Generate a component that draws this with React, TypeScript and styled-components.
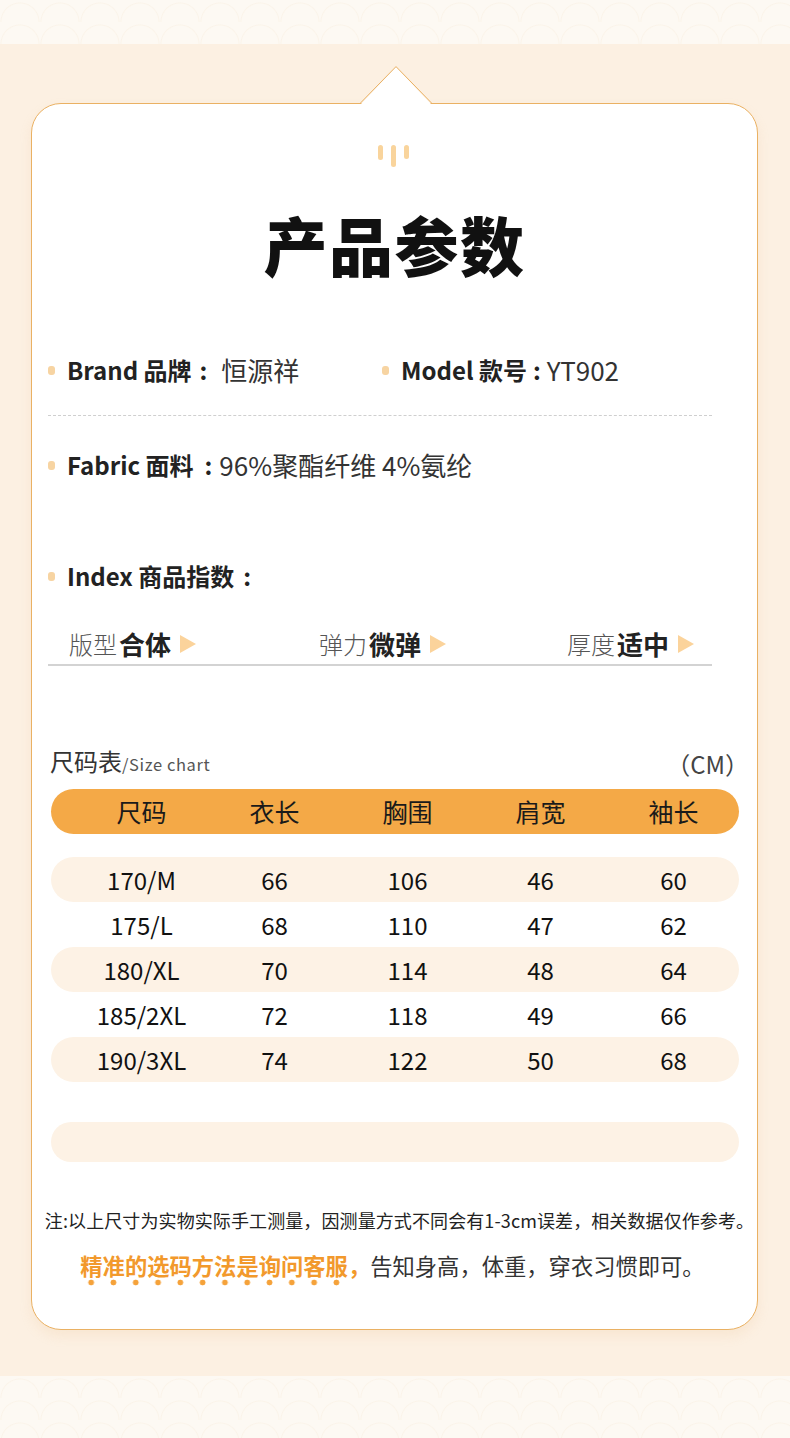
import React from "react";
import styled, { createGlobalStyle } from "styled-components";

const Global = createGlobalStyle`
  html, body { margin: 0; padding: 0; }
  body {
    width: 790px;
    font-family: "Noto Sans CJK SC", "Noto Sans", sans-serif;
    color: #222;
    background: #fcf0e2;
  }
`;

const Page = styled.div`
  width: 790px;
  height: 1438px;
  display: flex;
  flex-direction: column;
  overflow: hidden;
`;

const PatternBand = styled.div<{ $h: number }>`
  height: ${(p) => p.$h}px;
  flex: none;
  background-color: #fdf9f3;
  background-image: radial-gradient(circle at 50% 100%, transparent 18px, rgba(245, 225, 200, 0.22) 19px, transparent 20px);
  background-size: 40px 22px;
`;

const Middle = styled.div`
  flex: 1;
  background: #fcf0e2;
  padding: 59px 32px 0 31px;
`;

const Card = styled.div`
  position: relative;
  box-sizing: border-box;
  height: 1227px;
  background: #fff;
  border: 1px solid #eab163;
  border-radius: 30px;
  box-shadow: 0 6px 12px rgba(232, 190, 140, 0.18);
  display: flex;
  flex-direction: column;
`;

const Notch = styled.svg`
  position: absolute;
  top: -38px;
  left: 50%;
  transform: translateX(-50%);
  margin-left: 1px;
  overflow: visible;
`;

const Deco = styled.svg`
  align-self: center;
  margin-top: 41px;
  flex: none;
`;

const Title = styled.h1`
  margin: 44px 0 0;
  text-align: center;
  font-size: 64px;
  line-height: 64px;
  font-weight: 900;
  letter-spacing: 1.5px;
  color: #111;
`;

const InfoGrid = styled.div<{ $mt: number }>`
  margin: ${(p) => p.$mt}px 0 0 16px;
  display: grid;
  grid-template-columns: 334px 1fr;
  height: 32px;
`;

const InfoItem = styled.div`
  display: flex;
  align-items: center;
  font-size: 24px;
  line-height: 32px;
  white-space: nowrap;
`;

const Bullet = styled.span`
  width: 7px;
  height: 9px;
  border-radius: 3px;
  background: #f7d4a2;
  margin-right: 12px;
  flex: none;
`;

const Label = styled.span`
  font-weight: 700;
  color: #222;
`;

const Colon = styled.span<{ $ml?: number; $mr?: number }>`
  font-weight: 700;
  color: #222;
  margin: 0 ${(p) => p.$mr ?? 10}px 0 ${(p) => p.$ml ?? 8}px;
`;

const Value = styled.span`
  font-weight: 400;
  font-size: 26px;
  color: #333;
`;

const DashedLine = styled.div`
  margin: 29px 45px 0 16px;
  border-top: 1px dashed #cfcfcf;
`;

const IndexRow = styled.div`
  margin: 36px 45px 0 16px;
  padding: 0 0 4px 21px;
  border-bottom: 2px solid #d3d3d3;
  display: grid;
  grid-template-columns: 250px 248px 1fr;
`;

const IndexItem = styled.div`
  display: flex;
  align-items: center;
  font-size: 24px;
  line-height: 32px;
  white-space: nowrap;
`;

const IndexName = styled.span`
  font-weight: 300;
  color: #555;
`;

const IndexVal = styled.span`
  font-weight: 700;
  font-size: 26px;
  color: #222;
  margin-left: 2px;
`;

const Arrow = styled.span`
  width: 0;
  height: 0;
  margin-left: 9px;
  border-top: 9px solid transparent;
  border-bottom: 9px solid transparent;
  border-left: 16px solid #fbd39b;
`;

const ChartHead = styled.div`
  margin: 83px 8px 0 18px;
  height: 30px;
  display: flex;
  align-items: flex-end;
  justify-content: space-between;
  line-height: 30px;
`;

const ChartTitle = styled.div`
  font-size: 24px;
  line-height: 30px;
  color: #333;
  span {
    font-size: 16.5px;
    color: #555;
    letter-spacing: 0.6px;
  }
`;

const Unit = styled.div`
  font-size: 24px;
  line-height: 30px;
  color: #444;
`;

const TableRow = styled.div<{ $striped?: boolean; $header?: boolean; $mt?: number }>`
  margin: ${(p) => p.$mt ?? 0}px 18px 0 19px;
  height: 45px;
  box-sizing: border-box;
  padding-left: 24px;
  border-radius: 23px;
  display: grid;
  grid-template-columns: repeat(5, 133px);
  align-items: center;
  background: ${(p) => (p.$header ? "#f4a947" : p.$striped ? "#fdf2e5" : "transparent")};
  font-size: ${(p) => (p.$header ? 25 : 24)}px;
  color: ${(p) => (p.$header ? "#1a1a1a" : "#111")};
`;

const Cell = styled.div`
  text-align: center;
  line-height: 45px;
  white-space: nowrap;
`;

const EmptyStripe = styled.div`
  margin: 40px 18px 0 19px;
  height: 40px;
  border-radius: 20px;
  background: #fdf2e5;
`;

const Note = styled.p`
  margin: 45px 0 0;
  padding-left: 10px;
  text-align: center;
  font-size: 18px;
  line-height: 26px;
  color: #222;
  white-space: nowrap;
  letter-spacing: 0.1px;
`;

const Tip = styled.p`
  margin: 17px 0 0;
  padding-right: 4px;
  text-align: center;
  font-size: 22.3px;
  line-height: 30px;
  white-space: nowrap;
  color: #333;
`;

const TipStrong = styled.span`
  color: #f2992c;
  font-weight: 700;
`;

const Dotted = styled.span`
  padding-bottom: 5px;
  background-image: radial-gradient(circle, #f5a23a 2.6px, transparent 3.2px);
  background-size: 1em 7px;
  background-position: 0 100%;
  background-repeat: repeat-x;
`;

const header = ["尺码", "衣长", "胸围", "肩宽", "袖长"];
const rows = [
  ["170/M", "66", "106", "46", "60"],
  ["175/L", "68", "110", "47", "62"],
  ["180/XL", "70", "114", "48", "64"],
  ["185/2XL", "72", "118", "49", "66"],
  ["190/3XL", "74", "122", "50", "68"],
];

export default function App() {
  return (
    <>
      <Global />
      <Page>
        <PatternBand $h={44} />
        <Middle>
          <Card>
            <Notch width="72" height="40" viewBox="0 0 72 40">
              <path d="M0.5 38.5 L36 1 L71.5 38.5 L71.5 40 L0.5 40 Z" fill="#fff" />
              <path d="M0 37.5 L36 0.6 L72 37.5" fill="none" stroke="#eab163" strokeWidth="1" />
            </Notch>
            <Deco width="34" height="22" viewBox="0 0 34 22">
              <rect x="0" y="0" width="5" height="15" rx="2.5" fill="#f9d49c" />
              <rect x="13" y="0" width="5" height="22" rx="2.5" fill="#f9d49c" />
              <rect x="26" y="0" width="5" height="14" rx="2.5" fill="#f9d49c" />
            </Deco>
            <Title>产品参数</Title>
            <InfoGrid $mt={79}>
              <InfoItem>
                <Bullet />
                <Label>Brand 品牌</Label>
                <Colon $ml={8} $mr={14}>:</Colon>
                <Value>恒源祥</Value>
              </InfoItem>
              <InfoItem>
                <Bullet />
                <Label>Model 款号</Label>
                <Colon $ml={6} $mr={6}>:</Colon>
                <Value>YT902</Value>
              </InfoItem>
            </InfoGrid>
            <DashedLine />
            <InfoGrid $mt={33}>
              <InfoItem>
                <Bullet />
                <Label>Fabric 面料</Label>
                <Colon $ml={11} $mr={7}>:</Colon>
                <Value>96%聚酯纤维 4%氨纶</Value>
              </InfoItem>
            </InfoGrid>
            <InfoGrid $mt={79}>
              <InfoItem>
                <Bullet />
                <Label>Index 商品指数</Label>
                <Colon $ml={9} $mr={0}>:</Colon>
              </InfoItem>
            </InfoGrid>
            <IndexRow>
              <IndexItem>
                <IndexName>版型</IndexName>
                <IndexVal>合体</IndexVal>
                <Arrow />
              </IndexItem>
              <IndexItem>
                <IndexName>弹力</IndexName>
                <IndexVal>微弹</IndexVal>
                <Arrow />
              </IndexItem>
              <IndexItem>
                <IndexName>厚度</IndexName>
                <IndexVal>适中</IndexVal>
                <Arrow />
              </IndexItem>
            </IndexRow>
            <ChartHead>
              <ChartTitle>
                尺码表<span>/Size chart</span>
              </ChartTitle>
              <Unit>（CM）</Unit>
            </ChartHead>
            <TableRow $header $mt={10}>
              {header.map((h) => (
                <Cell key={h}>{h}</Cell>
              ))}
            </TableRow>
            {rows.map((r, i) => (
              <TableRow key={r[0]} $striped={i % 2 === 0} $mt={i === 0 ? 23 : 0}>
                {r.map((c, j) => (
                  <Cell key={j}>{c}</Cell>
                ))}
              </TableRow>
            ))}
            <EmptyStripe />
            <Note>注:以上尺寸为实物实际手工测量，因测量方式不同会有1-3cm误差，相关数据仅作参考。</Note>
            <Tip>
              <TipStrong>
                <Dotted>精准的选码方法是询问客服</Dotted>，
              </TipStrong>
              告知身高，体重，穿衣习惯即可。
            </Tip>
          </Card>
        </Middle>
        <PatternBand $h={62} />
      </Page>
    </>
  );
}
